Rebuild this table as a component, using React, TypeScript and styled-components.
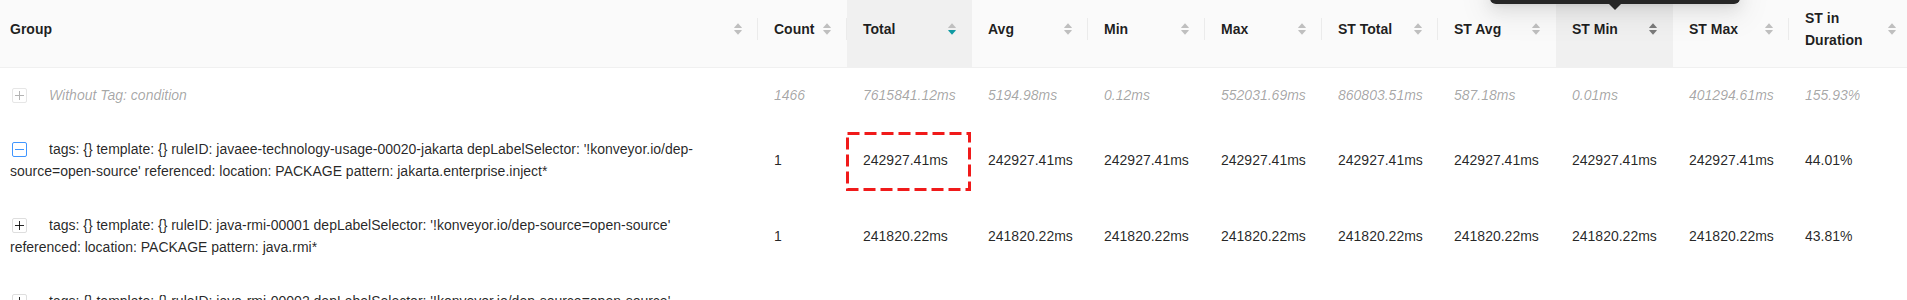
import React from "react";
import styled, { createGlobalStyle } from "styled-components";

const GlobalStyle = createGlobalStyle`
  html, body {
    margin: 0;
    padding: 0;
    background: #ffffff;
    overflow: hidden;
  }
  body {
    font-family: "Liberation Sans", Arial, sans-serif;
  }
`;

type SortState = "none" | "desc" | "hover";

type Column = {
  key: string;
  title: string;
  width: number;
  sort: SortState;
  shaded?: boolean;
  divider?: boolean;
  tooltip?: boolean;
};

const columns: Column[] = [
  { key: "group", title: "Group", width: 758, sort: "none", divider: true },
  { key: "count", title: "Count", width: 89, sort: "none", divider: true },
  { key: "total", title: "Total", width: 125, sort: "desc", shaded: true },
  { key: "avg", title: "Avg", width: 116, sort: "none", divider: true },
  { key: "min", title: "Min", width: 117, sort: "none", divider: true },
  { key: "max", title: "Max", width: 117, sort: "none", divider: true },
  { key: "stTotal", title: "ST Total", width: 116, sort: "none", divider: true },
  { key: "stAvg", title: "ST Avg", width: 118, sort: "none" },
  { key: "stMin", title: "ST Min", width: 117, sort: "hover", shaded: true, tooltip: true },
  { key: "stMax", title: "ST Max", width: 116, sort: "none", divider: true },
  { key: "duration", title: "ST in Duration", width: 123, sort: "none" },
];

type ExpandState = "disabled" | "open" | "closed";

type Row = {
  id: string;
  label: string;
  expand: ExpandState;
  muted?: boolean;
  highlightTotal?: boolean;
  values: string[];
};

const rows: Row[] = [
  {
    id: "none",
    label: "Without Tag: condition",
    expand: "disabled",
    muted: true,
    values: [
      "1466",
      "7615841.12ms",
      "5194.98ms",
      "0.12ms",
      "552031.69ms",
      "860803.51ms",
      "587.18ms",
      "0.01ms",
      "401294.61ms",
      "155.93%",
    ],
  },
  {
    id: "jakarta",
    label:
      "tags: {} template: {} ruleID: javaee-technology-usage-00020-jakarta depLabelSelector: '!konveyor.io/dep-source=open-source' referenced: location: PACKAGE pattern: jakarta.enterprise.inject*",
    expand: "open",
    highlightTotal: true,
    values: ["1", ...Array(8).fill("242927.41ms"), "44.01%"],
  },
  {
    id: "rmi1",
    label:
      "tags: {} template: {} ruleID: java-rmi-00001 depLabelSelector: '!konveyor.io/dep-source=open-source' referenced: location: PACKAGE pattern: java.rmi*",
    expand: "closed",
    values: ["1", ...Array(8).fill("241820.22ms"), "43.81%"],
  },
  {
    id: "rmi2",
    label:
      "tags: {} template: {} ruleID: java-rmi-00002 depLabelSelector: '!konveyor.io/dep-source=open-source' referenced: location: PACKAGE pattern: java.rmi.server*",
    expand: "closed",
    values: ["1", ...Array(8).fill("238114.57ms"), "43.15%"],
  },
];

const Viewport = styled.div`
  width: 1907px;
  height: 300px;
  overflow: hidden;
`;

const Table = styled.table`
  margin-top: -9px;
  width: 1912px;
  table-layout: fixed;
  border-collapse: separate;
  border-spacing: 0;
  font-size: 14px;
  line-height: 22px;
  color: rgba(0, 0, 0, 0.88);
`;

const HeadCell = styled.th<{ $shaded?: boolean; $divider?: boolean; $first?: boolean }>`
  position: relative;
  padding: 16px 16px 16px ${(p) => (p.$first ? "10px" : "16px")};
  background: ${(p) => (p.$shaded ? "#f0f0f0" : "#fafafa")};
  border-bottom: 1px solid #f0f0f0;
  text-align: left;
  font-weight: 700;
  color: rgba(0, 0, 0, 0.88);

  &::before {
    content: "";
    display: ${(p) => (p.$divider ? "block" : "none")};
    position: absolute;
    right: 0;
    top: 50%;
    width: 1px;
    height: 22px;
    transform: translateY(-50%);
    background: #ebebeb;
  }
`;

const HeadInner = styled.div`
  display: flex;
  align-items: center;
`;

const HeadTitle = styled.span`
  flex: 1;
  min-width: 0;
`;

const Sorter = styled.span`
  display: inline-flex;
  flex-direction: column;
  gap: 2px;
  margin-left: 4px;
`;

const Caret = styled.svg<{ $color: string }>`
  display: block;
  width: 8px;
  height: 5px;
  fill: ${(p) => p.$color};
`;

const Tooltip = styled.div`
  position: absolute;
  z-index: 2;
  left: 50%;
  top: -22px;
  width: 250px;
  height: 35px;
  transform: translateX(-50%);
  border-radius: 6px;
  background: #262626;
  box-shadow: 0 6px 16px rgba(0, 0, 0, 0.08), 0 3px 6px -4px rgba(0, 0, 0, 0.12),
    0 9px 28px 8px rgba(0, 0, 0, 0.05);

  &::after {
    content: "";
    position: absolute;
    left: 50%;
    top: 100%;
    margin-left: -6px;
    border-left: 6px solid transparent;
    border-right: 6px solid transparent;
    border-top: 6px solid #262626;
  }
`;

const BodyCell = styled.td<{ $muted?: boolean; $first?: boolean }>`
  position: relative;
  padding: 16px 16px 16px ${(p) => (p.$first ? "10px" : "16px")};
  vertical-align: middle;
  white-space: ${(p) => (p.$first ? "normal" : "nowrap")};
  color: ${(p) => (p.$muted ? "rgba(0, 0, 0, 0.36)" : "rgba(0, 0, 0, 0.86)")};
  font-style: ${(p) => (p.$muted ? "italic" : "normal")};
`;

const expandColors: Record<ExpandState, { border: string; mark: string }> = {
  disabled: { border: "#e6e6e6", mark: "#b3b3b3" },
  open: { border: "#4096ff", mark: "#4096ff" },
  closed: { border: "#dedede", mark: "rgba(0, 0, 0, 0.85)" },
};

const ExpandIcon = styled.span<{ $state: ExpandState }>`
  position: relative;
  display: inline-block;
  box-sizing: border-box;
  width: 15px;
  height: 15px;
  margin: 0 22px 0 2px;
  vertical-align: -3px;
  border: 1px solid ${(p) => expandColors[p.$state].border};
  border-radius: 2px;
  background: #ffffff;
  color: ${(p) => expandColors[p.$state].mark};

  &::before {
    content: "";
    position: absolute;
    left: 2px;
    right: 2px;
    top: 6px;
    height: 1px;
    background: currentColor;
  }

  &::after {
    content: "";
    display: ${(p) => (p.$state === "open" ? "none" : "block")};
    position: absolute;
    top: 2px;
    bottom: 2px;
    left: 6px;
    width: 1px;
    background: currentColor;
  }
`;

const Highlight = styled.svg`
  position: absolute;
  left: -1px;
  top: 10px;
  width: 125px;
  height: 59px;
  overflow: visible;
  pointer-events: none;
`;

function SortIcon({ sort }: { sort: SortState }) {
  const idle = "#bfbfbf";
  const up = sort === "hover" ? "#7a7a7a" : idle;
  const down = sort === "desc" ? "#109aa3" : sort === "hover" ? "#7a7a7a" : idle;
  return (
    <Sorter>
      <Caret $color={up} viewBox="0 0 8 5">
        <path d="M4 0.3 L7.8 4.6 Q8 5 7.5 5 H0.5 Q0 5 0.2 4.6 Z" />
      </Caret>
      <Caret $color={down} viewBox="0 0 8 5">
        <path d="M4 4.7 L7.8 0.4 Q8 0 7.5 0 H0.5 Q0 0 0.2 0.4 Z" />
      </Caret>
    </Sorter>
  );
}

export default function App() {
  return (
    <Viewport>
      <GlobalStyle />
      <Table>
        <colgroup>
          {columns.map((c) => (
            <col key={c.key} style={{ width: c.width }} />
          ))}
        </colgroup>
        <thead>
          <tr>
            {columns.map((c, i) => (
              <HeadCell key={c.key} $shaded={c.shaded} $divider={c.divider} $first={i === 0}>
                {c.tooltip && <Tooltip />}
                <HeadInner>
                  <HeadTitle>{c.title}</HeadTitle>
                  <SortIcon sort={c.sort} />
                </HeadInner>
              </HeadCell>
            ))}
          </tr>
        </thead>
        <tbody>
          {rows.map((r) => (
            <tr key={r.id}>
              <BodyCell $first $muted={r.muted}>
                <ExpandIcon $state={r.expand} />
                {r.label}
              </BodyCell>
              {r.values.map((v, i) => (
                <BodyCell key={i} $muted={r.muted}>
                  {v}
                  {r.highlightTotal && i === 1 && (
                    <Highlight viewBox="0 0 125 59">
                      <rect
                        x="1.5"
                        y="1.5"
                        width="122"
                        height="56"
                        fill="none"
                        stroke="#f01a1a"
                        strokeWidth="3"
                        strokeDasharray="12 5"
                      />
                    </Highlight>
                  )}
                </BodyCell>
              ))}
            </tr>
          ))}
        </tbody>
      </Table>
    </Viewport>
  );
}
